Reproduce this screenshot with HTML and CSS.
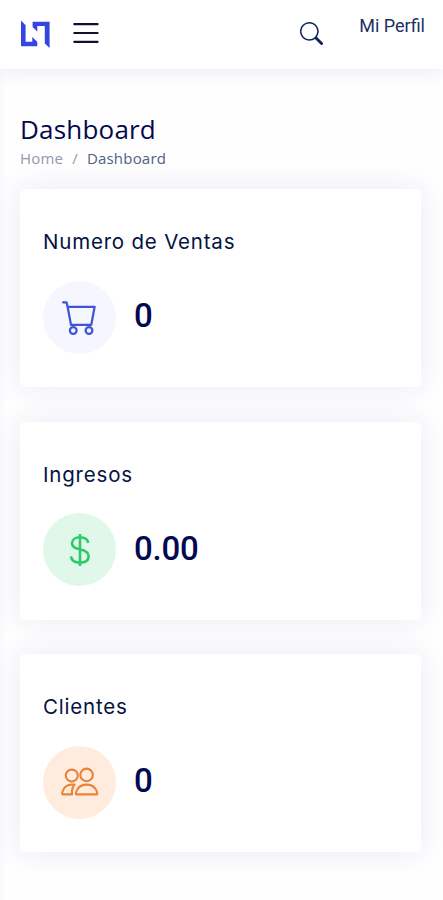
FILE: index.html
```html
<!DOCTYPE html>
<html lang="es">
<head>
  <meta charset="UTF-8">
  <meta name="viewport" content="width=device-width, initial-scale=1.0">
  <title>Dashboard</title>
  <link rel="stylesheet" href="styles.css">
</head>
<body>
  <!-- Header -->
  <header class="header">
    <a class="logo" href="#">
      <svg width="30" height="30" viewBox="0 0 30 30" fill="#3545e2">
        <path d="M1 1.5L5.6 6.3V22.8H12.3V18L17.3 22.9V27.2H1Z"/>
        <path d="M12.6 2.8H29.6V29L24.8 24.6V7H17.3V12.6L12.6 8Z"/>
      </svg>
    </a>
    <button class="menu-btn" aria-label="Menu">
      <svg width="26" height="22" viewBox="0 0 26 22" stroke="#111033" stroke-width="2.2" stroke-linecap="round">
        <path d="M1.3 2.1H24.6M1.3 11H24.6M1.3 19.8H24.6"/>
      </svg>
    </button>
    <button class="search-btn" aria-label="Buscar">
      <svg width="23" height="23" viewBox="0 0 16 16" fill="#0c2259">
        <path d="M11.742 10.344a6.5 6.5 0 1 0-1.397 1.398h-.001c.03.04.062.078.098.115l3.85 3.85a1 1 0 0 0 1.415-1.414l-3.85-3.85a1.007 1.007 0 0 0-.115-.1zM12 6.5a5.5 5.5 0 1 1-11 0 5.5 5.5 0 0 1 11 0z"/>
      </svg>
    </button>
    <a class="profile" href="#">Mi Perfil</a>
  </header>

  <main class="main">
    <div class="pagetitle">
      <h1>Dashboard</h1>
      <nav class="breadcrumb">
        <a href="#">Home</a>
        <span class="separator">/</span>
        <span class="active">Dashboard</span>
      </nav>
    </div>

    <!-- Cards -->
    <section class="cards">
      <div class="card sales">
        <h5 class="card-title">Numero de Ventas</h5>
        <div class="card-row">
          <div class="card-icon">
            <svg width="36" height="36" viewBox="0 0 16 16" fill="currentColor">
              <path d="M0 1.5A.5.5 0 0 1 .5 1H2a.5.5 0 0 1 .485.379L2.89 3H14.5a.5.5 0 0 1 .491.592l-1.5 8A.5.5 0 0 1 13 12H4a.5.5 0 0 1-.491-.408L2.01 3.607 1.61 2H.5a.5.5 0 0 1-.5-.5zM3.102 4l1.313 7h8.17l1.313-7H3.102zM5 12a2 2 0 1 0 0 4 2 2 0 0 0 0-4zm7 0a2 2 0 1 0 0 4 2 2 0 0 0 0-4zm-7 1a1 1 0 1 1 0 2 1 1 0 0 1 0-2zm7 0a1 1 0 1 1 0 2 1 1 0 0 1 0-2z"/>
            </svg>
          </div>
          <h6>0</h6>
        </div>
      </div>

      <div class="card revenue">
        <h5 class="card-title">Ingresos</h5>
        <div class="card-row">
          <div class="card-icon">
            <svg width="36" height="36" viewBox="0 0 36 36" fill="none" stroke="currentColor" stroke-width="2.6">
              <path d="M18 2V34M26.2 11C25.7 7.4 22.5 5.3 18 5.3C13.2 5.3 10 7.7 10 11.2C10 14.6 12.3 16.1 17.8 17.3C24.1 18.7 26.7 20.4 26.7 24.3C26.7 28.3 23.3 30.6 17.9 30.6C12.8 30.6 9.4 28.3 9 24.4"/>
            </svg>
          </div>
          <h6>0.00</h6>
        </div>
      </div>

      <div class="card customers">
        <h5 class="card-title">Clientes</h5>
        <div class="card-row">
          <div class="card-icon">
            <svg width="38" height="36" viewBox="0 0 38 36" fill="none" stroke="currentColor" stroke-width="2.1" stroke-linejoin="round">
              <circle cx="10.8" cy="11.6" r="6"/>
              <circle cx="25.6" cy="10.9" r="6.3"/>
              <path d="M15.8 30.4C14.9 30.4 14.7 29.6 15.1 28.3C16.5 23.6 20.3 20.6 25.7 20.6C31.1 20.6 34.7 23.6 36.1 28.3C36.5 29.6 36.3 30.4 35.4 30.4Z"/>
              <path d="M13.5 20.6C6 19.8 2.5 23.4 1.3 28.3C1 29.6 1.2 30.4 2.1 30.4H11.1C10.6 26 11.3 23 13.5 20.6Z"/>
            </svg>
          </div>
          <h6>0</h6>
        </div>
      </div>
    </section>
  </main>
</body>
</html>
```

FILE: styles.css
```css
/* General */
* {
  box-sizing: border-box;
}

body {
  margin: 0;
  min-height: 900px;
  font-family: "Open Sans", sans-serif;
  background: linear-gradient(to right, #f8f9fd, #fefeff 6px);
  color: #012970;
  overflow: hidden;
}

a {
  text-decoration: none;
}

button {
  padding: 0;
  border: none;
  background: none;
}

svg {
  display: block;
}

h1, h5, h6 {
  margin: 0;
}

/* Header */
.header {
  display: flex;
  align-items: flex-start;
  height: 69px;
  padding: 0 18px 0 20px;
  background-color: #fff;
  box-shadow: 0 2px 18px rgba(1, 41, 112, 0.09);
}

.logo {
  margin-top: 19px;
}

.menu-btn {
  margin: 22px 0 0 23px;
}

.search-btn {
  margin: 22px 0 0 auto;
}

.profile {
  margin: 14px 0 0 36px;
  font-family: Roboto, sans-serif;
  font-size: 18px;
  line-height: 24px;
  color: #1c315f;
}

/* Page title */
.main {
  padding: 44px 22px 0 20px;
}

.pagetitle {
  height: 76px;
}

.pagetitle h1 {
  font-size: 26px;
  font-weight: 400;
  line-height: 32px;
  letter-spacing: 0.2px;
  color: #04094f;
}

.breadcrumb {
  display: flex;
  gap: 9px;
  font-size: 15px;
  line-height: 26px;
  letter-spacing: 0.2px;
}

.breadcrumb a,
.separator {
  color: #9299aa;
}

.breadcrumb .active {
  color: #51617f;
}

/* Cards */
.cards {
  display: flex;
  flex-direction: column;
  gap: 34.4px;
}

.card {
  height: 198.2px;
  padding: 37px 22px 0 23px;
  border-radius: 5px;
  background-color: #fff;
  box-shadow: 0 0 30px rgba(1, 41, 112, 0.09);
}

.card-title {
  font-family: Inter, sans-serif;
  font-size: 20.5px;
  font-weight: 400;
  line-height: 32px;
  letter-spacing: 0.8px;
  color: #04133f;
}

.card-row {
  display: flex;
  align-items: center;
  gap: 18px;
  margin-top: 22.5px;
}

.card-icon {
  display: flex;
  align-items: center;
  justify-content: center;
  width: 73px;
  height: 73px;
  border-radius: 50%;
}

.card h6 {
  padding-bottom: 2px;
  font-family: Roboto, sans-serif;
  font-size: 33px;
  font-weight: 500;
  line-height: 40px;
  letter-spacing: -0.2px;
  color: #04094f;
}

.sales .card-icon {
  color: #4154d8;
  background-color: #f5f6fe;
}

.revenue .card-icon {
  color: #2eca6a;
  background-color: #e0f8e9;
}

.customers .card-icon {
  color: #ea8338;
  background-color: #ffecdf;
}
```
